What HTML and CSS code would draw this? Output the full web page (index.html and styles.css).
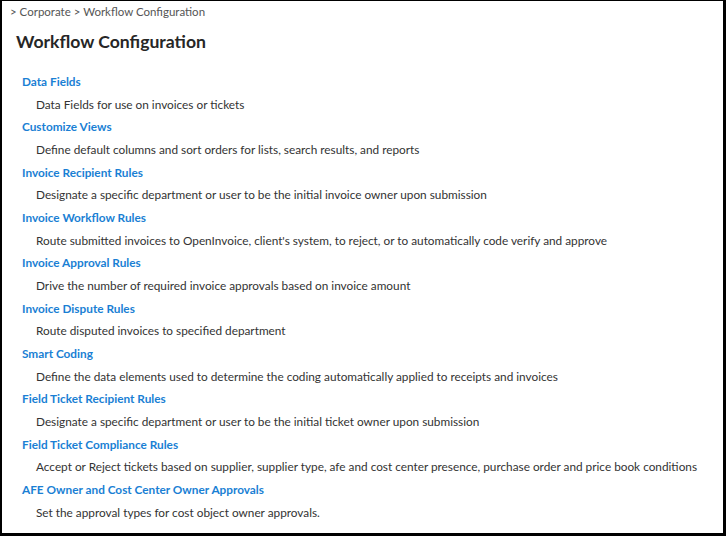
FILE: index.html
```html
<!DOCTYPE html>
<html>
<head>
<meta charset="utf-8">
<link rel="stylesheet" href="styles.css">
</head>
<body>
<div class="frame">
  <div class="breadcrumb">&gt; Corporate &gt; Workflow Configuration</div>
  <h1 class="title">Workflow Configuration</h1>
  <ul class="items">
    <li><a class="link">Data Fields</a><div class="desc">Data Fields for use on invoices or tickets</div></li>
    <li><a class="link">Customize Views</a><div class="desc">Define default columns and sort orders for lists, search results, and reports</div></li>
    <li><a class="link">Invoice Recipient Rules</a><div class="desc">Designate a specific department or user to be the initial invoice owner upon submission</div></li>
    <li><a class="link">Invoice Workflow Rules</a><div class="desc">Route submitted invoices to OpenInvoice, client's system, to reject, or to automatically code verify and approve</div></li>
    <li><a class="link">Invoice Approval Rules</a><div class="desc">Drive the number of required invoice approvals based on invoice amount</div></li>
    <li><a class="link">Invoice Dispute Rules</a><div class="desc">Route disputed invoices to specified department</div></li>
    <li><a class="link">Smart Coding</a><div class="desc">Define the data elements used to determine the coding automatically applied to receipts and invoices</div></li>
    <li><a class="link">Field Ticket Recipient Rules</a><div class="desc">Designate a specific department or user to be the initial ticket owner upon submission</div></li>
    <li><a class="link">Field Ticket Compliance Rules</a><div class="desc">Accept or Reject tickets based on supplier, supplier type, afe and cost center presence, purchase order and price book conditions</div></li>
    <li><a class="link">AFE Owner and Cost Center Owner Approvals</a><div class="desc">Set the approval types for cost object owner approvals.</div></li>
  </ul>
</div>
</body>
</html>
```

FILE: styles.css
```css
html, body {
  margin: 0;
  padding: 0;
  background: #000;
}
.frame {
  box-sizing: border-box;
  width: 726px;
  height: 536px;
  background: #fff;
  border-style: solid;
  border-color: #000;
  border-width: 1px 3px 3px 2px;
  font-family: "Lato", "Liberation Sans", sans-serif;
  font-size: 11.8px;
  color: #333;
  overflow: hidden;
}
.breadcrumb {
  padding-left: 8px;
  line-height: 22px;
  color: #555;
  font-size: 11.5px;
}
.title {
  margin: 0;
  padding-left: 14px;
  font-size: 17.6px;
  font-weight: 700;
  line-height: 22px;
  margin-top: 8px;
  color: #262626;
}
.items {
  list-style: none;
  margin: 18px 0 0 0;
  padding: 0 0 0 20px;
}
.items li {
  display: block;
}
.link {
  display: block;
  color: #1a7fd4;
  font-weight: 700;
  line-height: 22.6px;
  cursor: pointer;
}
.desc {
  padding-left: 14px;
  line-height: 22.75px;
  color: #333;
  white-space: nowrap;
}
```
